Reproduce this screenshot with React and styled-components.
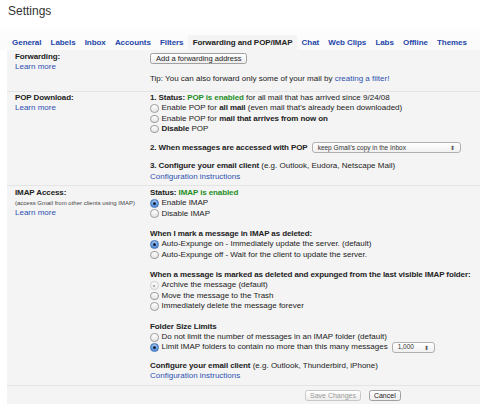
import React from 'react';
import styled, { createGlobalStyle } from 'styled-components';

const colors = {
  link: '#2f51b0',
  tab: '#2546a8',
  green: '#1e8e1e',
  text: '#222',
  panel: '#f4f4f4',
  rule: '#e4e4e4',
};

const GlobalStyle = createGlobalStyle`
  html, body {
    margin: 0;
    background: #fff;
    font-family: "Liberation Sans", Arial, sans-serif;
    color: ${colors.text};
  }
  b {
    letter-spacing: -0.1px;
  }
`;

const Page = styled.div`
  width: 480px;
  height: 408px;
  overflow: hidden;
`;

const Title = styled.h1`
  margin: 0;
  height: 28px;
  padding: 4px 0 0 8px;
  box-sizing: border-box;
  font-size: 12px;
  line-height: 14px;
  font-weight: normal;
  color: #333;
`;

const TabBar = styled.div`
  display: flex;
  align-items: flex-end;
  height: 22px;
  padding-left: 7.5px;
  background: linear-gradient(#fdfdfd, #fafafa);
`;

const Tab = styled.div`
  padding: 0 4.6px;
  line-height: 15px;
  font-size: 8px;
  font-weight: bold;
  letter-spacing: -0.07px;
  white-space: nowrap;
  color: ${(p) => (p.$active ? '#222' : colors.tab)};
  background: ${(p) => (p.$active ? colors.panel : 'transparent')};
`;

const Panel = styled.div`
  margin-left: 7px;
  background: ${colors.panel};
  font-size: 8px;
  line-height: 10.4px;
`;

const Section = styled.div`
  display: grid;
  grid-template-columns: 143px 1fr;
  padding: ${(p) => p.$pad || '2px 0 6px'};
  border-bottom: 1px solid ${colors.rule};
`;

const LabelCol = styled.div`
  padding-left: 8px;
`;

const Label = styled.b`
  display: block;
`;

const Note = styled.div`
  font-size: 6px;
  line-height: 10px;
  color: #444;
`;

const Link = styled.a`
  color: ${colors.link};
  text-decoration: none;
  cursor: pointer;
`;

const ValueCol = styled.div`
  display: flex;
  flex-direction: column;
`;

const Block = styled.div`
  margin-top: ${(p) => p.$gap ?? 10}px;
`;

const Line = styled.div`
  white-space: nowrap;
  display: flex;
  align-items: center;
  min-height: 10.4px;
`;

const Green = styled.b`
  color: ${colors.green};
`;

const RadioRow = styled.label`
  display: flex;
  align-items: center;
  white-space: nowrap;
  height: 10.4px;
`;

const RadioDot = styled.span`
  width: 8.5px;
  height: 8.5px;
  margin-right: 3px;
  border-radius: 50%;
  box-sizing: border-box;
  flex: none;
  position: relative;
  border: 1px solid ${(p) => (p.$on ? '#4c79b8' : p.$dim ? '#cfcfcf' : '#9c9c9c')};
  background: ${(p) =>
    p.$on
      ? 'radial-gradient(circle at 50% 35%, #b9d6f4, #4d8ad6 70%)'
      : p.$dim
      ? 'linear-gradient(#fbfbfb, #ececec)'
      : 'linear-gradient(#ffffff, #e4e4e4)'};
  &::after {
    content: '';
    display: ${(p) => (p.$on || p.$dim ? 'block' : 'none')};
    position: absolute;
    left: 50%;
    top: 50%;
    width: ${(p) => (p.$on ? 3 : 2)}px;
    height: ${(p) => (p.$on ? 3 : 2)}px;
    margin: ${(p) => (p.$on ? '-1.5px' : '-1px')};
    border-radius: 50%;
    background: ${(p) => (p.$on ? '#10223d' : '#9a9a9a')};
  }
`;

const Radio = ({ on, dim, children }) => (
  <RadioRow>
    <RadioDot $on={on} $dim={dim} />
    <span>{children}</span>
  </RadioRow>
);

const Button = styled.button`
  font-family: "Liberation Sans", Arial, sans-serif;
  font-size: ${(p) => p.$fs ?? 7.5}px;
  height: 11px;
  line-height: 9px;
  padding: 0 ${(p) => p.$px ?? 5}px;
  border: 1px solid #a0a0a0;
  border-radius: 2.5px;
  background: linear-gradient(#ffffff, #ededed);
  color: ${(p) => (p.disabled ? '#9a9a9a' : '#222')};
  border-color: ${(p) => (p.disabled ? '#c8c8c8' : '#a0a0a0')};
  align-self: flex-start;
  white-space: nowrap;
`;

const Select = styled.div`
  display: inline-flex;
  align-items: center;
  justify-content: space-between;
  box-sizing: border-box;
  width: ${(p) => p.$w}px;
  height: 11px;
  margin-left: ${(p) => p.$ml ?? 4}px;
  padding: 0 5px;
  border: 1px solid #b0b0b0;
  border-radius: 3px;
  background: linear-gradient(#ffffff, #f0f0f0);
  font-size: 6.5px;
  color: #333;
`;

const Arrows = styled.span`
  font-size: 6px;
  color: #555;
  line-height: 1;
`;

const Footer = styled.div`
  display: flex;
  gap: 8px;
  padding: 4px 0 3px 298px;
`;

const tabs = ['General', 'Labels', 'Inbox', 'Accounts', 'Filters', 'Forwarding and POP/IMAP', 'Chat', 'Web Clips', 'Labs', 'Offline', 'Themes'];

export default function App() {
  return (
    <Page>
      <GlobalStyle />
      <Title>Settings</Title>
      <TabBar>
        {tabs.map((t) => (
          <Tab key={t} $active={t === 'Forwarding and POP/IMAP'}>
            {t}
          </Tab>
        ))}
      </TabBar>
      <Panel>
        <Section>
          <LabelCol>
            <Label>Forwarding:</Label>
            <Link>Learn more</Link>
          </LabelCol>
          <ValueCol>
            <Block $gap={1}>
              <Button>Add a forwarding address</Button>
            </Block>
            <Block $gap={10}>
              <Line>
                Tip: You can also forward only some of your mail by&nbsp;<Link>creating a filter!</Link>
              </Line>
            </Block>
          </ValueCol>
        </Section>

        <Section $pad="1px 0 3px">
          <LabelCol>
            <Label>POP Download:</Label>
            <Link>Learn more</Link>
          </LabelCol>
          <ValueCol>
            <Line>
              <b>1. Status:&nbsp;</b>
              <Green>POP is enabled</Green>&nbsp;for all mail that has arrived since 9/24/08
            </Line>
            <Radio>
              Enable POP for <b>all mail</b> (even mail that's already been downloaded)
            </Radio>
            <Radio>
              Enable POP for <b>mail that arrives from now on</b>
            </Radio>
            <Radio>
              <b>Disable</b> POP
            </Radio>
            <Block $gap={8}>
              <Line>
                <b>2. When messages are accessed with POP</b>
                <Select $w={149}>
                  <span>keep Gmail's copy in the Inbox</span>
                  <Arrows>⬍</Arrows>
                </Select>
              </Line>
            </Block>
            <Block $gap={8}>
              <Line>
                <b>3. Configure your email client</b>&nbsp;(e.g. Outlook, Eudora, Netscape Mail)
              </Line>
              <Link>Configuration instructions</Link>
            </Block>
          </ValueCol>
        </Section>

        <Section $pad="1.5px 0 3.5px">
          <LabelCol>
            <Label>IMAP Access:</Label>
            <Note>(access Gmail from other clients using IMAP)</Note>
            <Link>Learn more</Link>
          </LabelCol>
          <ValueCol>
            <Line>
              <b>Status:&nbsp;</b>
              <Green>IMAP is enabled</Green>
            </Line>
            <Radio on>Enable IMAP</Radio>
            <Radio>Disable IMAP</Radio>
            <Block>
              <Line>
                <b>When I mark a message in IMAP as deleted:</b>
              </Line>
              <Radio on>Auto-Expunge on - Immediately update the server. (default)</Radio>
              <Radio>Auto-Expunge off - Wait for the client to update the server.</Radio>
            </Block>
            <Block>
              <Line>
                <b>When a message is marked as deleted and expunged from the last visible IMAP folder:</b>
              </Line>
              <Radio dim>Archive the message (default)</Radio>
              <Radio>Move the message to the Trash</Radio>
              <Radio>Immediately delete the message forever</Radio>
            </Block>
            <Block>
              <Line>
                <b>Folder Size Limits</b>
              </Line>
              <Radio>Do not limit the number of messages in an IMAP folder (default)</Radio>
              <Radio on>
                <Line>
                  Limit IMAP folders to contain no more than this many messages
                  <Select $w={43} $ml={4}>
                    <span>1,000</span>
                    <Arrows>⬍</Arrows>
                  </Select>
                </Line>
              </Radio>
            </Block>
            <Block $gap={8}>
              <Line>
                <b>Configure your email client</b>&nbsp;(e.g. Outlook, Thunderbird, iPhone)
              </Line>
              <Link>Configuration instructions</Link>
            </Block>
          </ValueCol>
        </Section>

        <Footer>
          <Button disabled $fs={7} $px={4}>Save Changes</Button>
          <Button $fs={7} $px={4}>Cancel</Button>
        </Footer>
      </Panel>
    </Page>
  );
}
